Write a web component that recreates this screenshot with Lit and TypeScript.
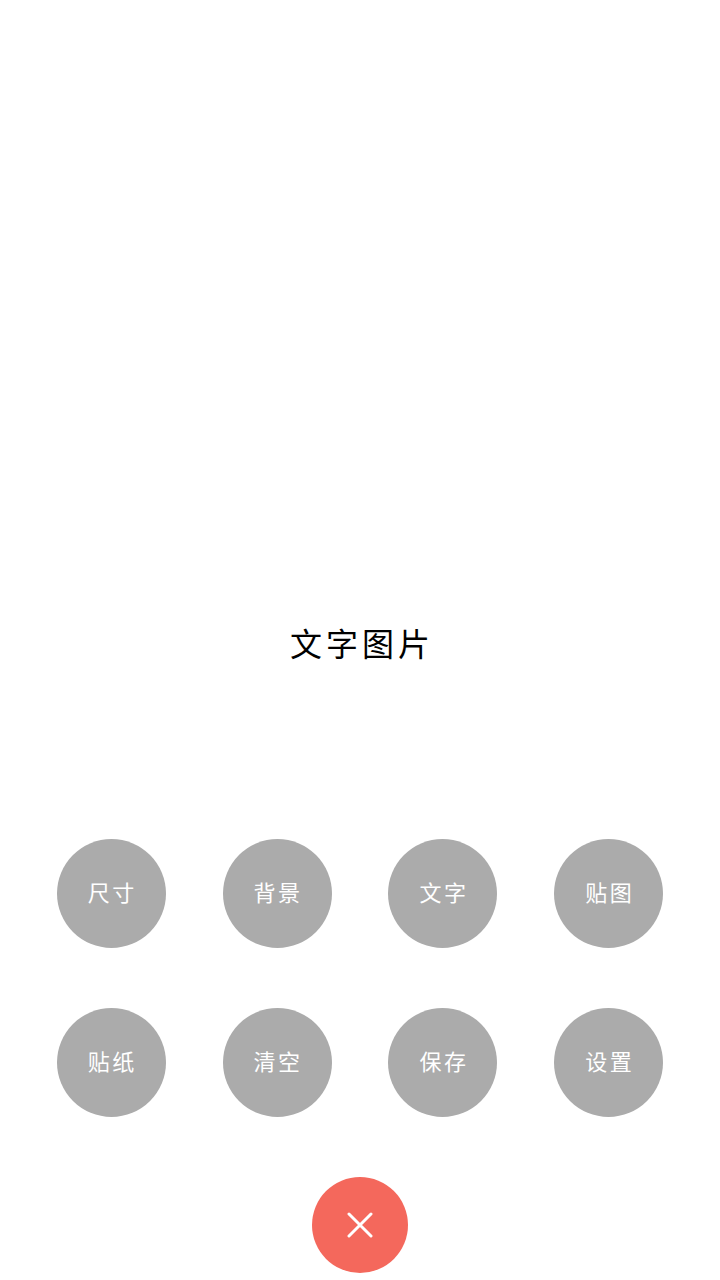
import { LitElement, html, css } from "lit";
import { customElement } from "lit/decorators.js";

const LABELS = ["尺寸", "背景", "文字", "贴图", "贴纸", "清空", "保存", "设置"];

@customElement("app-root")
export class AppRoot extends LitElement {
  static styles = css`
    :host {
      display: block;
      width: 720px;
      height: 1280px;
      background: #ffffff;
      overflow: hidden;
      font-family: "Noto Sans CJK SC", "Noto Sans CJK TC", sans-serif;
    }
    .page {
      display: flex;
      flex-direction: column;
      align-items: center;
      height: 1280px;
      box-sizing: border-box;
    }
    .stage {
      height: 838.5px;
      width: 100%;
      box-sizing: border-box;
      padding-top: 617.5px;
      display: flex;
      justify-content: center;
    }
    .title {
      font-size: 32px;
      line-height: 48px;
      letter-spacing: 4px;
      margin-right: -4px;
      color: #000000;
      font-weight: 400;
    }
    .grid {
      width: 606.5px;
      display: grid;
      grid-template-columns: repeat(4, 109px);
      justify-content: space-between;
      row-gap: 60.5px;
    }
    .btn {
      width: 109px;
      height: 109px;
      box-sizing: border-box;
      padding: 0 0 5px 2px;
      border-radius: 50%;
      background: #ababab;
      color: #ffffff;
      display: flex;
      align-items: center;
      justify-content: center;
      font-size: 22px;
      letter-spacing: 2.5px;
      font-weight: 400;
      line-height: 1;
    }
    .close {
      width: 96px;
      height: 96px;
      margin-top: 60px;
      border-radius: 50%;
      background: #f4685c;
      display: flex;
      align-items: center;
      justify-content: center;
    }
    .close svg {
      width: 26px;
      height: 26px;
      display: block;
    }
  `;

  render() {
    return html`
      <div class="page">
        <div class="stage"><div class="title">文字图片</div></div>
        <div class="grid">
          ${LABELS.map((l) => html`<div class="btn">${l}</div>`)}
        </div>
        <div class="close">
          <svg viewBox="0 0 26 26" fill="none" stroke="#ffffff" stroke-width="3" stroke-linecap="round">
            <path d="M2 2 L24 24 M24 2 L2 24"></path>
          </svg>
        </div>
      </div>
    `;
  }
}
